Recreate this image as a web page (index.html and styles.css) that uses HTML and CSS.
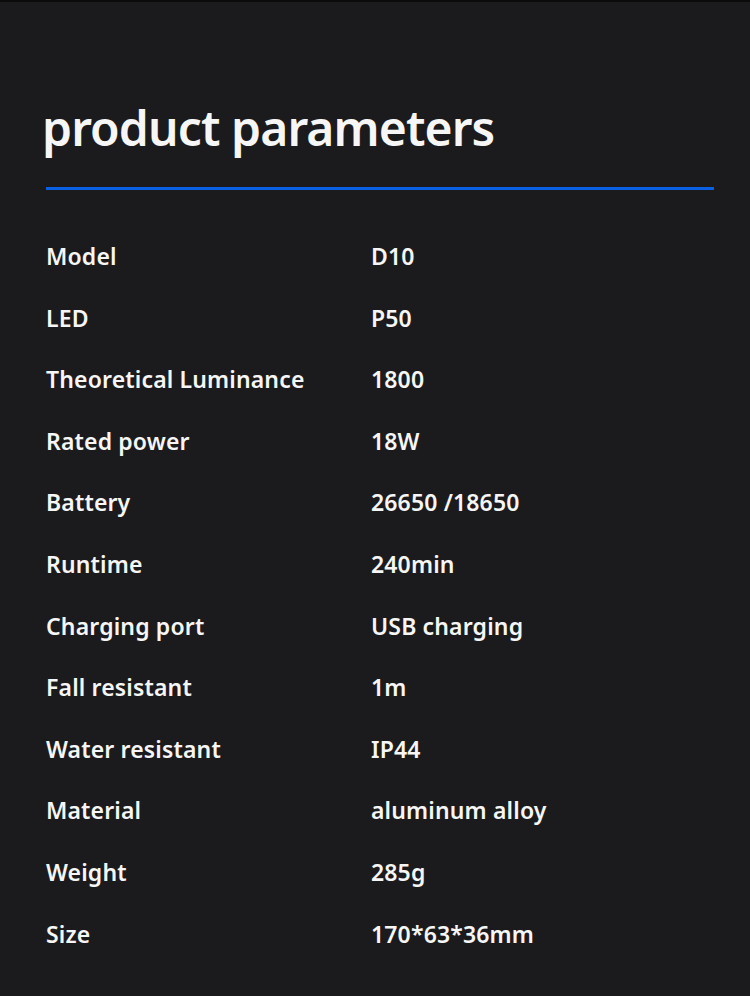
FILE: index.html
```html
<!DOCTYPE html>
<html lang="en">
<head>
<meta charset="utf-8">
<link rel="stylesheet" href="styles.css">
<title>product parameters</title>
</head>
<body>
<div class="page">
  <h1 class="title">product parameters</h1>
  <div class="rule"></div>
  <div class="params">
    <div class="label">Model</div><div class="value">D10</div>
    <div class="label">LED</div><div class="value">P50</div>
    <div class="label">Theoretical Luminance</div><div class="value">1800</div>
    <div class="label">Rated power</div><div class="value">18W</div>
    <div class="label">Battery</div><div class="value">26650 /18650</div>
    <div class="label">Runtime</div><div class="value">240min</div>
    <div class="label">Charging port</div><div class="value">USB charging</div>
    <div class="label">Fall resistant</div><div class="value">1m</div>
    <div class="label">Water resistant</div><div class="value">IP44</div>
    <div class="label">Material</div><div class="value">aluminum alloy</div>
    <div class="label">Weight</div><div class="value">285g</div>
    <div class="label">Size</div><div class="value">170*63*36mm</div>
  </div>
</div>
</body>
</html>
```
FILE: styles.css
```css
html, body {
  margin: 0;
  padding: 0;
  background: #1b1b1d;
}
body {
  font-family: "Noto Sans", "Open Sans", sans-serif;
  color: #f6f6f6;
}
.page {
  height: 996px;
  border-top: 2px solid #0b0b0b;
  box-sizing: border-box;
  overflow: hidden;
}
.title {
  margin: 0;
  padding: 92px 0 0 42px;
  font-size: 48px;
  font-weight: 600;
  line-height: 68px;
  letter-spacing: -0.9px;
}
.rule {
  margin: 25px 0 0 46px;
  width: 668px;
  height: 3px;
  background: #0a60e2;
}
.params {
  display: grid;
  grid-template-columns: 325px 1fr;
  margin: 36px 0 0 46px;
  font-size: 23px;
  font-weight: 600;
  line-height: 61.6px;
  letter-spacing: 0.15px;
}
```
